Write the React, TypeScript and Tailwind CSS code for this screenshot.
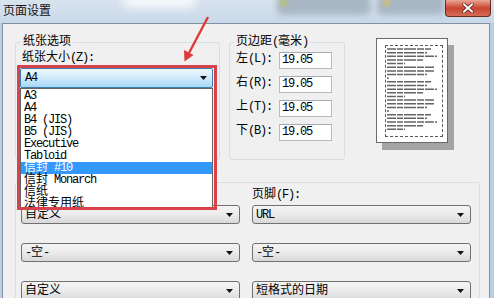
import React from "react";

const CJK = /[\u2E80-\u9FFF\uF900-\uFAFF\uFF00-\uFFEF\u3000-\u303F]/;

function T({ s }: { s: string }) {
  const runs: { c: boolean; t: string }[] = [];
  for (const ch of s) {
    const c = CJK.test(ch);
    const last = runs[runs.length - 1];
    if (last && last.c === c) last.t += ch;
    else runs.push({ c, t: ch });
  }
  return (
    <>
      {runs.map((r, i) =>
        r.c ? (
          <span key={i} className="font-['Noto_Sans_CJK_SC',sans-serif] text-[12px] leading-[8px] tracking-normal">
            {r.t}
          </span>
        ) : (
          <span key={i} className="font-['Liberation_Mono',monospace] text-[12px] leading-[12px] tracking-[-1.2px] whitespace-pre">
            {r.t}
          </span>
        )
      )}
    </>
  );
}

function Caret() {
  return (
    <svg width="7" height="4" viewBox="0 0 7 4" className="shrink-0">
      <path d="M0 0H7L3.5 4Z" fill="#111" />
    </svg>
  );
}

function Combo({ text, focused = false, tall = false }: { text: string; focused?: boolean; tall?: boolean }) {
  return (
    <div
      className={
        focused
          ? "flex h-[20px] items-center justify-between rounded-[2px] border border-[#3c7fb1] bg-gradient-to-b from-[#eef8fe] via-[#cfeafb] to-[#a6d8f4] pl-[4px] pr-[5px]"
          : tall
          ? "flex h-[20px] items-center justify-between rounded-[3px] border border-[#707070] bg-gradient-to-b from-[#f4f4f4] via-[#ebebeb] to-[#d8d8d8] pl-[3px] pr-[6px]"
          : "flex h-[19px] items-center justify-between rounded-[3px] border border-[#707070] bg-gradient-to-b from-[#f4f4f4] via-[#ebebeb] to-[#d8d8d8] pl-[3px] pr-[6px]"
      }
    >
      <div className="whitespace-nowrap leading-[12px]">
        <T s={text} />
      </div>
      <Caret />
    </div>
  );
}

const ITEMS = ["A3", "A4", "B4 (JIS)", "B5 (JIS)", "Executive", "Tabloid", "信封 #10", "信封 Monarch", "信纸", "法律专用纸"];

const LINES = [44, 40, 50, 36, 18, 47, 48, 40, 2, 44, 40, 50, 36, 18, 47, 48, 40, 2, 44, 40, 50, 36, 18];

export default function App() {
  const margins: [string, string][] = [
    ["左(L):", "19.05"],
    ["右(R):", "19.05"],
    ["上(T):", "19.05"],
    ["下(B):", "19.05"],
  ];
  return (
    <div className="relative h-[298px] w-[494px] overflow-hidden bg-[#b9cde3] font-['Liberation_Mono',monospace] text-[12px] leading-[12px] text-black">
      {/* title bar */}
      <div className="relative flex h-[23px] items-start justify-between bg-gradient-to-b from-[#d8e3ef] to-[#c9d8e9]">
        <div className="pointer-events-none absolute inset-0 overflow-hidden">
          <div className="absolute left-[122px] top-[-8px] h-[16px] w-[74px] rounded-full bg-[#f3f7fb] blur-[4px]" />
          <div className="absolute left-[277px] top-[-6px] h-[21px] w-[94px] rounded-[5px] bg-[#a9b6c4] blur-[3px]" />
          <div className="absolute left-[377px] top-[-6px] h-[21px] w-[68px] rounded-[5px] bg-[#a9b6c4] blur-[3px]" />
          <div className="absolute left-[280px] top-[-1px] h-[7px] w-[7px] rounded-full bg-[#b5c66a] blur-[2px]" />
          <div className="absolute left-[383px] top-[-1px] h-[7px] w-[7px] rounded-full bg-[#d6c36c] blur-[2px]" />
        </div>
        <div className="relative pl-[3px] pt-[4px] font-['Noto_Sans_CJK_SC',sans-serif] text-[12px] leading-[12px] text-[#141414]">
          页面设置
        </div>
        <div className="relative mr-[3px] flex h-[17px] w-[46px] items-center justify-center rounded-b-[4px] border border-t-0 border-[#6b2a20] bg-gradient-to-b from-[#eaa596] via-[#c8452f] to-[#d66b55]">
          <svg width="12" height="10" viewBox="0 0 12 10">
            <path d="M2 1.5L10 8.5M10 1.5L2 8.5" stroke="#4a1a12" strokeWidth="3.4" strokeLinecap="square" />
            <path d="M2 1.5L10 8.5M10 1.5L2 8.5" stroke="#ffffff" strokeWidth="2" strokeLinecap="square" />
          </svg>
        </div>
      </div>

      {/* client area */}
      <div className="ml-[2px] flex h-[275px] w-[488px] flex-col overflow-hidden border-l border-r border-t border-[#8391a1] bg-[#f0f0f0]">
        <div className="flex pl-[12px] pt-[12px]">
          {/* paper options */}
          <fieldset className="h-[124px] w-[205px] rounded-[3px] border border-[#d5dfe5] px-[4px]">
            <legend className="ml-[1px] px-[2px] leading-[12px]">
              <T s="纸张选项" />
            </legend>
            <div className="ml-[2px] mt-[4px] leading-[12px]">
              <T s="纸张大小(Z):" />
            </div>
            <div className="mt-[4px] w-[193px]">
              <Combo text="A4" focused />
            </div>
          </fieldset>

          {/* margins */}
          <fieldset className="ml-[9px] h-[124px] w-[116px] rounded-[3px] border border-[#d5dfe5] pl-[4px]">
            <legend className="px-[2px] leading-[12px]">
              <T s="页边距(毫米)" />
            </legend>
            <div className="mt-[4px] flex flex-col gap-[7px]">
              {margins.map(([l, v]) => (
                <div key={l} className="flex items-start">
                  <div className="w-[45px] pl-[2px] pt-[1px] leading-[12px]">
                    <T s={l} />
                  </div>
                  <div className="h-[17px] w-[53px] border border-[#b5bcc5] border-t-[#a3a9b2] bg-white pl-[2px] pt-[1px] leading-[12px]">
                    <T s={v} />
                  </div>
                </div>
              ))}
            </div>
          </fieldset>

          {/* preview */}
          <div className="ml-[31px] mt-[2px]">
            <div className="flex h-[105px] w-[72px] border border-[#6a6a6a] bg-white pb-[5px] pl-[8px] pr-[4px] pt-[6px] shadow-[6px_7px_0_0_#a4a4a4]">
              <div className="flex-1 border border-dashed border-[#5a5a5a] pl-[1px] pt-[2px]">
                <svg width="54" height="86" viewBox="0 0 54 86">
                  {LINES.map((w, i) => (
                    <line
                      key={i}
                      x1={0}
                      x2={w}
                      y1={i * 3.65 + 1}
                      y2={i * 3.65 + 1}
                      stroke="#4a4a4a"
                      strokeWidth={1.5}
                      strokeDasharray="9 1 6 1 12 1 7 1"
                      opacity={0.85}
                    />
                  ))}
                </svg>
              </div>
            </div>
          </div>
        </div>

        {/* header & footer (its caption and the header label lie under the open list) */}
        <fieldset className="ml-[12px] mt-[22px] h-[140px] w-[465px] shrink-0 rounded-[3px] border border-[#d5dfe5] pl-[5px] pr-[8px]">
          <div className="grid grid-cols-2 gap-x-[12px]">
            <div className="flex flex-col">
              <div className="mt-[6px] h-[12px]" />
              <div className="mt-[4px]">
                <Combo text="自定义" />
              </div>
              <div className="mt-[19px]">
                <Combo text="-空-" />
              </div>
              <div className="mt-[19px]">
                <Combo text="自定义" tall />
              </div>
            </div>
            <div className="flex flex-col">
              <div className="mt-[6px] h-[12px] leading-[12px]">
                <T s="页脚(F):" />
              </div>
              <div className="mt-[4px]">
                <Combo text="URL" />
              </div>
              <div className="mt-[19px]">
                <Combo text="-空-" />
              </div>
              <div className="mt-[19px]">
                <Combo text="短格式的日期" tall />
              </div>
            </div>
          </div>
        </fieldset>
      </div>

      {/* open dropdown list */}
      <div className="absolute left-[20px] top-[88px] h-[121px] w-[193px] overflow-hidden border border-[#646464] bg-white pt-[1px]">
        {ITEMS.map((it) => (
          <div
            key={it}
            className={
              it === "信封 #10"
                ? "h-[12px] whitespace-nowrap bg-[#3399ff] pl-[3px] leading-[12px] text-white"
                : "h-[12px] whitespace-nowrap pl-[3px] leading-[12px] text-black"
            }
          >
            <T s={it} />
          </div>
        ))}
      </div>

      {/* red annotation box */}
      <div className="absolute left-[17px] top-[65px] h-[145px] w-[200px] border-[3px] border-[#d8434b]" />

      {/* red annotation arrow */}
      <svg className="pointer-events-none absolute left-0 top-0" width="494" height="298" viewBox="0 0 494 298">
        <line x1="208" y1="17" x2="189" y2="53" stroke="#de3a3a" strokeWidth="2.4" />
        <polygon points="184.5,61.5 184,50 193.5,55" fill="#de3a3a" />
      </svg>
    </div>
  );
}
